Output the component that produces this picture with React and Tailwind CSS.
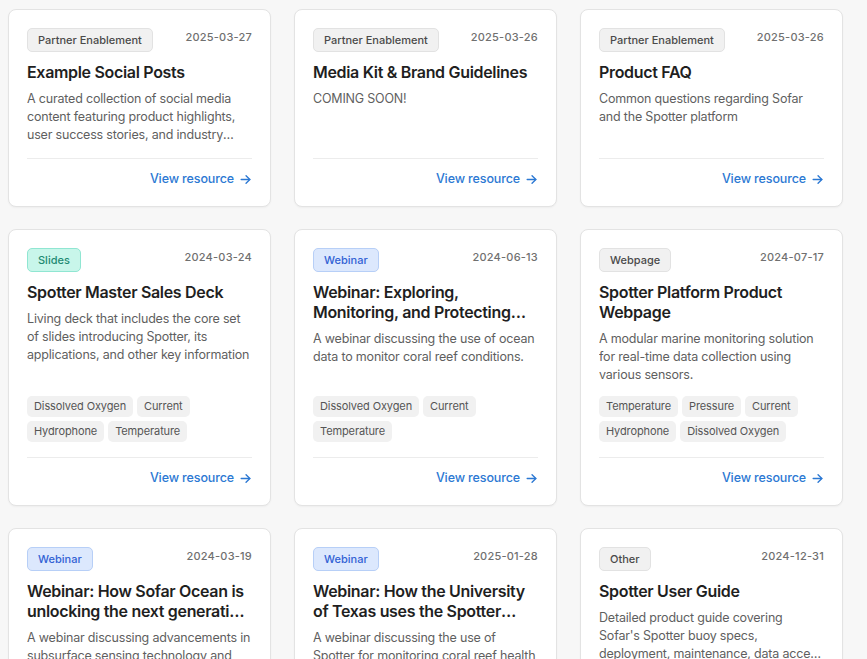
import React from "react";

const BADGE = {
  gray: "bg-[#f1f1f1] border-[#e2e2e2] text-[#4a4a4a]",
  teal: "bg-[#c8f6ea] border-[#90e6d2] text-[#1f8a72]",
  blue: "bg-[#dce8fd] border-[#b7cff7] text-[#3262d4]",
};

const resources = [
  {
    type: "Partner Enablement",
    color: "gray",
    date: "2025-03-27",
    title: "Example Social Posts",
    desc: "A curated collection of social media content featuring product highlights, user success stories, and industry insights from the Sofar community.",
  },
  {
    type: "Partner Enablement",
    color: "gray",
    date: "2025-03-26",
    title: "Media Kit & Brand Guidelines",
    desc: "COMING SOON!",
  },
  {
    type: "Partner Enablement",
    color: "gray",
    date: "2025-03-26",
    title: "Product FAQ",
    desc: "Common questions regarding Sofar and the Spotter platform",
  },
  {
    type: "Slides",
    color: "teal",
    date: "2024-03-24",
    title: "Spotter Master Sales Deck",
    desc: "Living deck that includes the core set of slides introducing Spotter, its applications, and other key information",
    tags: ["Dissolved Oxygen", "Current", "Hydrophone", "Temperature"],
  },
  {
    type: "Webinar",
    color: "blue",
    date: "2024-06-13",
    title: "Webinar: Exploring, Monitoring, and Protecting Coral Reefs with Ocean Data",
    desc: "A webinar discussing the use of ocean data to monitor coral reef conditions.",
    tags: ["Dissolved Oxygen", "Current", "Temperature"],
  },
  {
    type: "Webpage",
    color: "gray",
    date: "2024-07-17",
    title: "Spotter Platform Product Webpage",
    desc: "A modular marine monitoring solution for real-time data collection using various sensors.",
    tags: ["Temperature", "Pressure", "Current", "Hydrophone", "Dissolved Oxygen"],
  },
  {
    type: "Webinar",
    color: "blue",
    date: "2024-03-19",
    title: "Webinar: How Sofar Ocean is unlocking the next generation of subsurface sensing",
    desc: "A webinar discussing advancements in subsurface sensing technology and applications for ocean research.",
    tags: ["Temperature", "Pressure"],
  },
  {
    type: "Webinar",
    color: "blue",
    date: "2025-01-28",
    title: "Webinar: How the University of Texas uses the Spotter platform",
    desc: "A webinar discussing the use of Spotter for monitoring coral reef health in the Gulf of Mexico.",
    tags: ["Temperature", "Current"],
  },
  {
    type: "Other",
    color: "gray",
    date: "2024-12-31",
    title: "Spotter User Guide",
    desc: "Detailed product guide covering Sofar's Spotter buoy specs, deployment, maintenance, data access and more.",
    tags: ["Hydrophone"],
  },
];

function ResourceCard({ r }) {
  return (
    <div className="flex flex-col rounded-lg border border-[#e3e3e3] bg-white px-[18px] pt-[18px] pb-[17px] shadow-[0_1px_2px_rgba(0,0,0,0.04)]">
      <div className="flex items-start justify-between">
        <span
          className={`inline-flex h-[24px] items-center rounded-[5px] border px-[10px] text-[11px] font-medium ${BADGE[r.color]}`}
        >
          {r.type}
        </span>
        <span className="pt-[1px] text-[11px] font-medium tracking-[0.02em] text-[#707070]">
          {r.date}
        </span>
      </div>

      <h3 className="mt-[10px] line-clamp-2 text-[16px] font-semibold leading-[20px] tracking-[-0.02em] text-[#1f1f1f]">
        {r.title}
      </h3>
      <p className="mt-[8px] line-clamp-3 text-[12.5px] leading-[18px] tracking-[-0.015em] text-[#5f5f5f]">
        {r.desc}
      </p>

      <div className="mt-auto flex flex-col pt-[12px]">
        {r.tags && (
          <div className="flex flex-wrap gap-[4px]">
            {r.tags.map((t) => (
              <span
                key={t}
                className="inline-flex h-[21px] items-center rounded-[5px] bg-[#f1f1f1] px-[7px] text-[11px] tracking-[-0.01em] text-[#555555]"
              >
                {t}
              </span>
            ))}
          </div>
        )}
        <div className={`${r.tags ? "mt-[15px]" : "mt-[2px]"} flex justify-end border-t border-[#ececec] pt-[10px]`}>
          <a
            href="#"
            className="flex items-center gap-[5px] text-[12.5px] font-medium leading-[20px] tracking-[-0.01em] text-[#2b78d3]"
          >
            View resource
            <svg width="13" height="13" viewBox="0 0 24 24" fill="none" stroke="currentColor" strokeWidth="2.5" strokeLinecap="round" strokeLinejoin="round">
              <path d="M4 12h16" />
              <path d="M13 5l7 7-7 7" />
            </svg>
          </a>
        </div>
      </div>
    </div>
  );
}

export default function App() {
  return (
    <div className="min-h-screen bg-[#f7f7f7] pl-[8px] pt-[9px] font-['Inter',sans-serif]">
      <div className="grid grid-cols-[263px_263px_263px] gap-x-[23px] gap-y-[22px]">
        {resources.map((r, i) => (
          <ResourceCard key={i} r={r} />
        ))}
      </div>
    </div>
  );
}
